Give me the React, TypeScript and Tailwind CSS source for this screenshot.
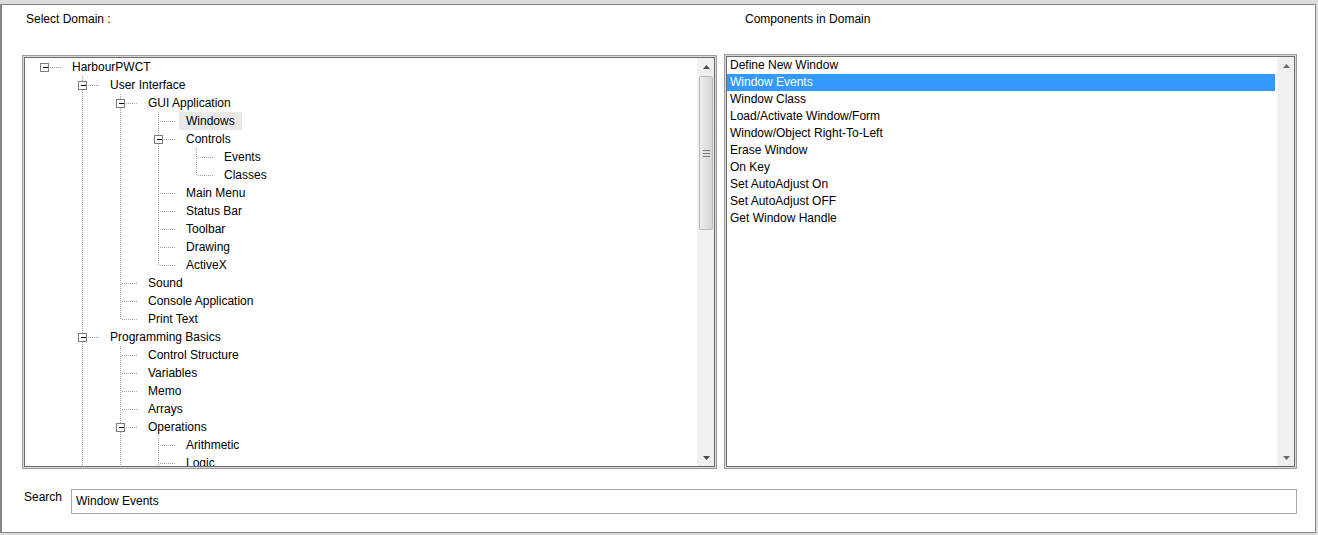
type Node = { label: string; level: number; more: boolean; exp?: boolean; sel?: boolean };

const tree: Node[] = [
  { label: "HarbourPWCT", level: 0, more: false, exp: true },
  { label: "User Interface", level: 1, more: true, exp: true },
  { label: "GUI Application", level: 2, more: true, exp: true },
  { label: "Windows", level: 3, more: true, sel: true },
  { label: "Controls", level: 3, more: true, exp: true },
  { label: "Events", level: 4, more: true },
  { label: "Classes", level: 4, more: false },
  { label: "Main Menu", level: 3, more: true },
  { label: "Status Bar", level: 3, more: true },
  { label: "Toolbar", level: 3, more: true },
  { label: "Drawing", level: 3, more: true },
  { label: "ActiveX", level: 3, more: false },
  { label: "Sound", level: 2, more: true },
  { label: "Console Application", level: 2, more: true },
  { label: "Print Text", level: 2, more: false },
  { label: "Programming Basics", level: 1, more: true, exp: true },
  { label: "Control Structure", level: 2, more: true },
  { label: "Variables", level: 2, more: true },
  { label: "Memo", level: 2, more: true },
  { label: "Arrays", level: 2, more: true },
  { label: "Operations", level: 2, more: true, exp: true },
  { label: "Arithmetic", level: 3, more: true },
  { label: "Logic", level: 3, more: true },
  { label: "Comparison", level: 3, more: false },
];

const components = [
  "Define New Window",
  "Window Events",
  "Window Class",
  "Load/Activate Window/Form",
  "Window/Object Right-To-Left",
  "Erase Window",
  "On Key",
  "Set AutoAdjust On",
  "Set AutoAdjust OFF",
  "Get Window Handle",
];

// which ancestor columns keep a vertical guide for each row
function guidesFor(index: number): number[] {
  const lvl = tree[index].level;
  const out: number[] = [];
  for (let j = 1; j < lvl; j++) {
    for (let k = index - 1; k >= 0; k--) {
      if (tree[k].level === j) {
        if (tree[k].more) out.push(j);
        break;
      }
    }
  }
  return out;
}

const cx = (i: number) => 19.5 + 38 * i;
const dot = { stroke: "#a0a0a0", strokeWidth: 1, strokeDasharray: "1 1" };

function TreeRow({ node, guides }: { node: Node; guides: number[] }) {
  const L = node.level;
  const w = 40 + 38 * L;
  return (
    <div className="flex h-[18px] shrink-0 items-center">
      <svg width={w} height={18} className="shrink-0" shapeRendering="crispEdges">
        {guides.map((j) => (
          <line key={j} x1={cx(j)} y1={0} x2={cx(j)} y2={18} {...dot} />
        ))}
        {L > 0 && <line x1={cx(L)} y1={0} x2={cx(L)} y2={node.more ? 18 : 10} {...dot} />}
        <line x1={cx(L) + (node.exp ? 5 : 1)} y1={9.5} x2={w - 3} y2={9.5} {...dot} />
        {node.exp && (
          <>
            <rect x={cx(L) - 4} y={5.5} width={8} height={8} fill="#ffffff" stroke="#7c7c7c" />
            <line x1={cx(L) - 2} y1={9.5} x2={cx(L) + 3} y2={9.5} stroke="#000000" />
          </>
        )}
      </svg>
      <span className={`px-[7px] leading-[18px] whitespace-nowrap ${node.sel ? "bg-[#e8e8e8]" : ""}`}>
        {node.label}
      </span>
    </div>
  );
}

function Arrow({ down, color = "#5a5a5a" }: { down?: boolean; color?: string }) {
  return (
    <svg width="7" height="4" viewBox="0 0 7 4">
      <path d={down ? "M0 0 L7 0 L3.5 4 Z" : "M0 4 L3.5 0 L7 4 Z"} fill={color} />
    </svg>
  );
}

function ScrollBar({ thumb }: { thumb?: boolean }) {
  return (
    <div className="w-[17px] shrink-0 flex flex-col bg-[#f0f0f0] border-l border-[#f5f5f5]">
      <div className="h-[17px] flex items-center justify-center">
        <Arrow color={thumb ? "#4d4d4d" : "#6a6a6a"} />
      </div>
      {thumb && (
        <div className="mx-px mt-px h-[154px] rounded-[2px] border border-[#b9b9b9] bg-gradient-to-r from-[#ececec] to-[#d5d5d5] flex flex-col items-center justify-center gap-[2px]">
          <div className="w-[7px] h-px bg-[#7a7a7a]" />
          <div className="w-[7px] h-px bg-[#7a7a7a]" />
          <div className="w-[7px] h-px bg-[#7a7a7a]" />
        </div>
      )}
      <div className="flex-1" />
      <div className="h-[17px] flex items-center justify-center">
        <Arrow down color={thumb ? "#4d4d4d" : "#6a6a6a"} />
      </div>
    </div>
  );
}

function Frame({ className, children }: { className: string; children: React.ReactNode }) {
  return (
    <div className={`border border-[#9c9c9c] bg-[#dadada] p-px ${className}`}>
      <div className="h-full border border-[#6b6b6b] bg-white flex overflow-hidden">{children}</div>
    </div>
  );
}

export default function App() {
  return (
    <div className="w-[1318px] h-[535px] bg-[#dcdcdc] pt-[4px] font-['Liberation_Sans',Arial,sans-serif] text-[12px] text-black">
      <div className="w-[1316px] h-[529px] bg-white border-t border-b border-l-2 border-r border-[#858585] flex flex-col">
        <div className="h-[48px] shrink-0 flex pt-[7px] leading-[14px]">
          <div className="w-[743px] pl-[24px]">Select Domain :</div>
          <div>Components in Domain</div>
        </div>

        <div className="flex items-end gap-[7px] pl-[20px] pt-px">
          <Frame className="w-[695px] h-[414px]">
            <div className="flex-1 flex flex-col overflow-hidden">
              {tree.map((n, i) => (
                <TreeRow key={n.label} node={n} guides={guidesFor(i)} />
              ))}
            </div>
            <ScrollBar thumb />
          </Frame>

          <Frame className="w-[573px] h-[415px]">
            <div className="flex-1 flex flex-col pr-[2px]">
              {components.map((c) => (
                <div
                  key={c}
                  className={`h-[17px] leading-[17px] pl-[3px] whitespace-nowrap ${
                    c === "Window Events" ? "bg-[#3399ff] text-white" : ""
                  }`}
                >
                  {c}
                </div>
              ))}
            </div>
            <ScrollBar />
          </Frame>
        </div>

        <div className="mt-[20px] flex items-start pl-[22px]">
          <div className="w-[47px] mt-px leading-[14px]">Search</div>
          <div className="w-[1226px] h-[25px] border border-[#ababab] pl-[4px] leading-[23px]">Window Events</div>
        </div>
      </div>
    </div>
  );
}
